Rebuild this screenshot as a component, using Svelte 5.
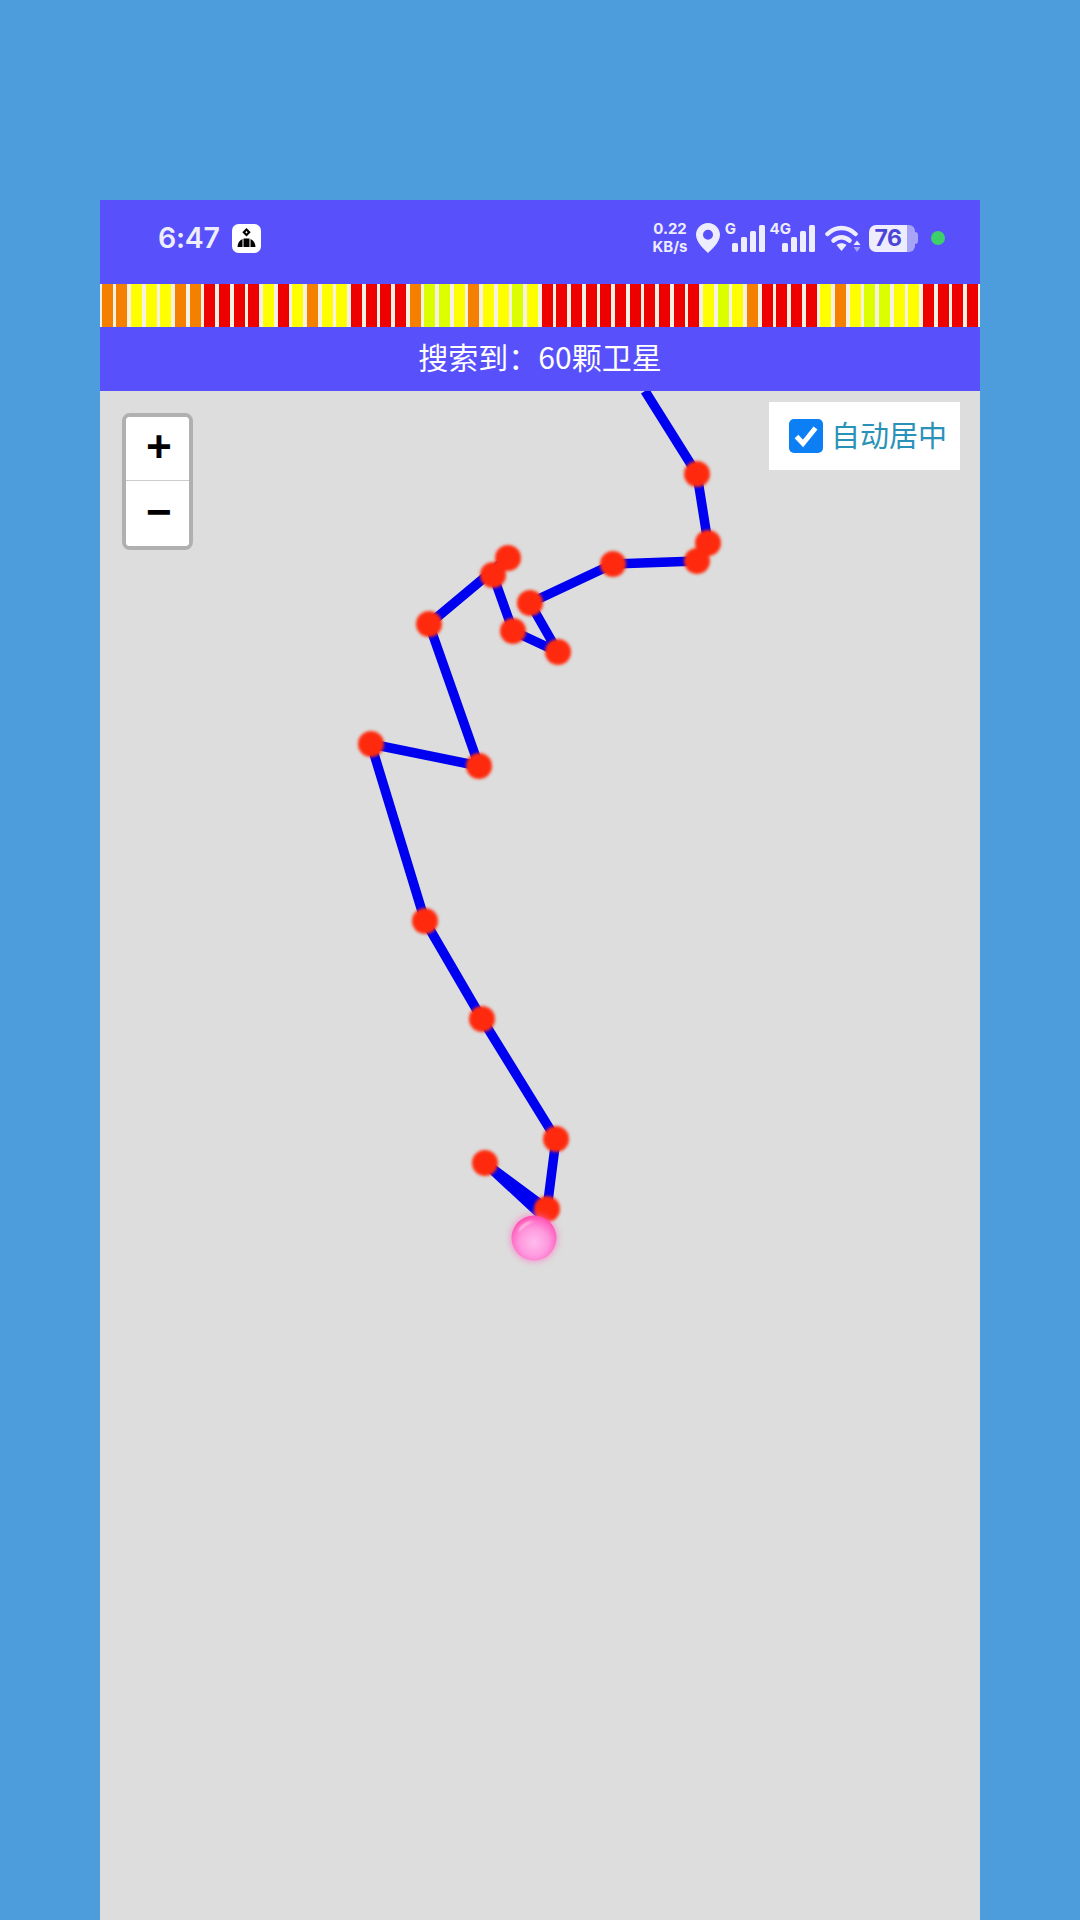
<script>
  const c = { O: '#f58000', Y: '#ffff00', L: '#dcff00', R: '#ee0000' };
  const seq = 'OOYYYOORRRRYRYOYYRRRROLLYOYYLYRRRRRRRRRRRYLYORRRRYOYLLYYRRRR';
  const bars = seq.split('').map((k) => c[k]);
  const pts = [
    [645, 391], [697, 474], [708, 543], [697, 561], [613, 564], [530, 603], [558, 652],
    [513, 631], [493, 575], [508, 558], [429, 624], [479, 766], [371, 744], [425, 921],
    [482, 1019], [556, 1139], [547, 1209], [485, 1163]
  ];
  const line = pts.map((p) => p.join(',')).join(' ');
  const dots = pts.slice(1);
  let centered = $state(true);
</script>

<div class="page">
  <header class="status">
    <div class="left">
      <span class="time">6:47</span>
      <svg class="notif" viewBox="0 0 29 29" aria-hidden="true">
        <rect width="29" height="29" rx="6.500" fill="#fff" />
        <path d="M14.500 4l4.200 4.200-4.200 4.200-4.200-4.200z" fill="#000" />
        <path d="M14.500 7l1.200 1.200-1.200 1.200-1.200-1.200z" fill="#fff" />
        <path d="M11.500 14.500h6v8.500h-6zM10.500 15v8H5.500c.2-3.800 2-6.800 5-8zM18.500 15c3 1.200 4.800 4.200 5 8h-5z" fill="#000" />
      </svg>
    </div>
    <div class="right">
      <div class="speed"><span>0.22</span><span>KB/s</span></div>
      <svg class="pin" viewBox="0 0 24 30" aria-hidden="true">
        <path fill-rule="evenodd" fill="#eeedfd" d="M12 0C5.400 0 0 5.300 0 11.800 0 19.500 8.500 26.500 12 30c3.500-3.500 12-10.500 12-18.200C24 5.300 18.600 0 12 0zm0 6.800a5 5 0 1 1 0 10 5 5 0 0 1 0-10z" />
      </svg>
      <div class="sig">
        <span class="net">G</span>
        <svg viewBox="0 0 33 27" aria-hidden="true">
          <rect x="0" y="18" width="6" height="9" rx="1.500" /><rect x="9" y="12" width="6" height="15" rx="1.500" /><rect x="18" y="6" width="6" height="21" rx="1.500" /><rect x="27" y="0" width="6" height="27" rx="1.500" />
        </svg>
      </div>
      <div class="sig four">
        <span class="net">4G</span>
        <svg viewBox="0 0 33 27" aria-hidden="true">
          <rect x="0" y="18" width="6" height="9" rx="1.500" /><rect x="9" y="12" width="6" height="15" rx="1.500" /><rect x="18" y="6" width="6" height="21" rx="1.500" /><rect x="27" y="0" width="6" height="27" rx="1.500" />
        </svg>
      </div>
      <svg class="wifi" viewBox="0 0 36 27" aria-hidden="true">
        <g fill="none" stroke="#eeedfd" stroke-width="4.500" stroke-linecap="round">
          <path d="M2.500 9C10.500 1 22.500 1 30.500 9" />
          <path d="M8.500 15.500c5-4.300 11-4.300 16 0" />
        </g>
        <path d="M11.500 20c3-2.400 7-2.400 10 0l-5 6z" fill="#eeedfd" />
        <path d="M32 15.500l3.500 4.500h-7z" fill="#eeedfd" />
        <path d="M32 27l3.500-5h-7z" fill="#a7a4f8" />
      </svg>
      <div class="batt">
        <span class="fill">76</span><span class="rest"></span><span class="nub"></span>
      </div>
      <span class="dot"></span>
    </div>
  </header>

  <div class="bars">
    {#each bars as color}
      <span class="bar" style:background={color}></span>
    {/each}
  </div>

  <div class="count">搜索到：60颗卫星</div>

  <main class="map">
    <svg class="route" viewBox="100 391 880 1529" aria-hidden="true">
      <defs>
        <radialGradient id="ball" cx="50%" cy="60%" r="58%">
          <stop offset="0" stop-color="#ffbcec" />
          <stop offset="0.55" stop-color="#ff98de" />
          <stop offset="0.85" stop-color="#ff6cc4" />
          <stop offset="1" stop-color="#ff50b0" />
        </radialGradient>
        <filter id="soft" x="-30%" y="-30%" width="160%" height="160%"><feGaussianBlur stdDeviation="1.500" /></filter>
        <filter id="glow" x="-40%" y="-40%" width="180%" height="180%"><feGaussianBlur stdDeviation="3" /></filter>
        <filter id="shine" x="-40%" y="-40%" width="180%" height="180%"><feGaussianBlur stdDeviation="1.200" /></filter>
      </defs>
      <polyline points={line} fill="none" stroke="#0000f0" stroke-width="9.500" stroke-linejoin="round" />
      <line x1="485" y1="1163" x2="540" y2="1214" stroke="#0000f0" stroke-width="9.500" />
      <g fill="#ff2a0c" filter="url(#soft)">
        {#each dots as d}
          <circle cx={d[0]} cy={d[1]} r="13" />
        {/each}
      </g>
      <circle cx="534" cy="1238" r="24" fill="#ff70c4" opacity="0.6" filter="url(#glow)" />
      <circle cx="534" cy="1238" r="22.500" fill="url(#ball)" />
      <path d="M518 1233c2-8 9-12 17-12-7 2-12 6-17 12z" fill="#fff" opacity="0.7" filter="url(#shine)" />
    </svg>

    <div class="zoom">
      <button type="button" class="zbtn">+</button>
      <button type="button" class="zbtn">−</button>
    </div>

    <label class="auto">
      <input type="checkbox" bind:checked={centered} />
      <span class="box">
        <svg viewBox="0 0 34 34" aria-hidden="true"><path d="M7.500 17.500l6.500 7L26.500 9" fill="none" stroke="#fff" stroke-width="5" /></svg>
      </span>
      <span class="lab">自动居中</span>
    </label>
  </main>
</div>

<style>
  :global(body) {
    margin: 0;
    background: #4d9cdc;
    font-family: "Noto Sans CJK SC", "Noto Sans", sans-serif;
  }
  .page {
    box-sizing: border-box;
    height: 1920px;
    padding: 200px 100px 0;
    display: flex;
    flex-direction: column;
    overflow: hidden;
  }
  .status {
    box-sizing: border-box;
    height: 84px;
    flex: none;
    background: #5750fb;
    display: flex;
    align-items: center;
    justify-content: space-between;
    padding: 0 35px 8px 58px;
    color: #eeedfd;
  }
  .left {
    display: flex;
    align-items: center;
    gap: 12px;
  }
  .time {
    font: 600 28.500px/1 Inter, sans-serif;
    letter-spacing: -0.300px;
    width: 62px;
    white-space: nowrap;
  }
  .notif {
    width: 29px;
    height: 29px;
    display: block;
  }
  .right {
    display: flex;
    align-items: center;
  }
  .speed {
    display: flex;
    flex-direction: column;
    align-items: center;
    font: 700 15px/18px Inter, sans-serif;
    width: 36px;
  }
  .pin {
    width: 24px;
    height: 30px;
    margin-left: 8px;
    display: block;
  }
  .sig {
    position: relative;
    width: 33px;
    height: 27px;
    margin-left: 12px;
    fill: #eeedfd;
  }
  .sig.four {
    margin-left: 17px;
  }
  .sig svg {
    display: block;
    width: 33px;
    height: 27px;
  }
  .net {
    position: absolute;
    right: 29px;
    top: -3px;
    font: 700 15px/14px Inter, sans-serif;
  }
  .four .net {
    right: 24px;
  }
  .wifi {
    width: 36px;
    height: 27px;
    margin-left: 10px;
    display: block;
  }
  .batt {
    display: flex;
    align-items: center;
    margin-left: 8px;
    width: 49px;
    height: 27px;
  }
  .fill {
    width: 38px;
    height: 27px;
    background: #eeedfd;
    border-radius: 7px 0 0 7px;
    color: #4a44d8;
    font: 700 23px/27px Inter, sans-serif;
    letter-spacing: -0.500px;
    text-align: center;
  }
  .rest {
    width: 8px;
    height: 27px;
    background: #a7a4f8;
    border-radius: 0 6px 6px 0;
  }
  .nub {
    width: 3px;
    height: 12px;
    background: #a7a4f8;
    border-radius: 0 3px 3px 0;
  }
  .dot {
    width: 14px;
    height: 14px;
    margin-left: 13px;
    border-radius: 50%;
    background: #3ccf6a;
  }
  .bars {
    height: 43px;
    flex: none;
    background: #f7f1e4;
    display: flex;
  }
  .bar {
    flex: 1;
    margin: 0 2.170px 0 1.500px;
  }
  .count {
    height: 64px;
    flex: none;
    background: #5750fb;
    color: #fff;
    font-size: 30px;
    line-height: 58px;
    text-align: center;
  }
  .map {
    flex: 1;
    position: relative;
    background: #dddddd;
    overflow: hidden;
  }
  .route {
    position: absolute;
    inset: 0;
    width: 100%;
    height: 100%;
  }
  .zoom {
    position: absolute;
    left: 22px;
    top: 22px;
    width: 71px;
    box-sizing: border-box;
    border: 4px solid #b0b0b0;
    border-radius: 8px;
    background: #fff;
    display: flex;
    flex-direction: column;
    overflow: hidden;
  }
  .zbtn {
    height: 65px;
    padding: 2px 0 0 3px;
    border: 0;
    background: #fff;
    color: #000;
    font: 700 44px/1 "Liberation Mono", monospace;
  }
  .zbtn:first-child {
    height: 64px;
    border-bottom: 1px solid #cccccc;
  }
  .auto {
    position: absolute;
    right: 20px;
    top: 11px;
    width: 191px;
    height: 68px;
    box-sizing: border-box;
    padding-left: 20px;
    background: #fff;
    color: #2a92b8;
    font-size: 29px;
    display: flex;
    align-items: center;
    gap: 8px;
    white-space: nowrap;
  }
  .lab {
    margin-top: -4px;
  }
  .auto input {
    position: absolute;
    opacity: 0;
    width: 0;
    height: 0;
  }
  .box {
    width: 34px;
    height: 34px;
    border-radius: 5px;
    background: #0d7ff5;
    flex: none;
  }
  .box svg {
    display: block;
    width: 34px;
    height: 34px;
  }
</style>
